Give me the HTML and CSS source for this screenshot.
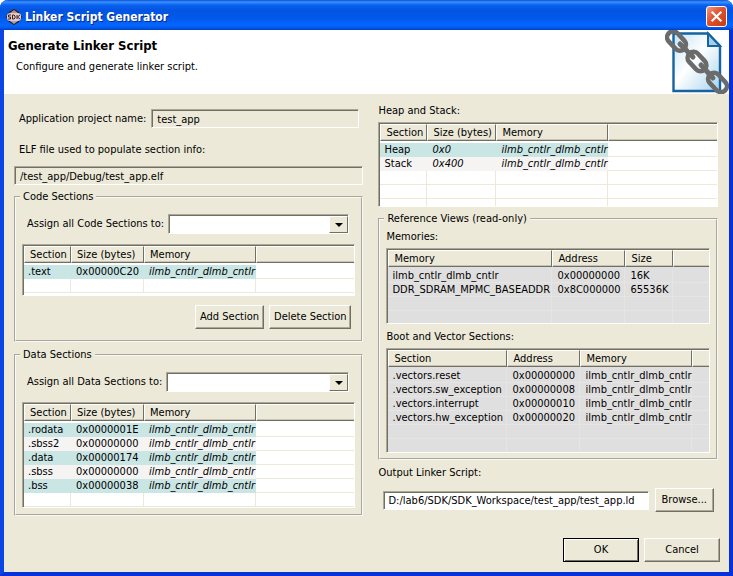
FILE: index.html
```html
<!DOCTYPE html>
<html lang="en">
<head>
    <meta charset="UTF-8">
    <meta name="viewport" content="width=device-width, initial-scale=1.0">
    <title>Linker Script Generator</title>
    <link rel="stylesheet" href="styles.css">
</head>
<body>
    <div class="window">
        <!-- Title bar -->
        <div class="titlebar">
            <svg class="app-icon" viewBox="0 0 16 16" aria-hidden="true">
                <path d="M8 0L13 3L16 8L13 13L8 16L3 13L0 8L3 3Z" fill="#2a1c22"/>
                <path d="M8 1L12 4H4Z" fill="#c98a7a"/>
                <path d="M4 12H12L8 15Z" fill="#a5a5b2"/>
                <rect x="1" y="4" width="14" height="8" rx="3" fill="#d9cfd0"/>
                <path d="M5 6H2.500V8H4.500V10H2M6.500 6V10H8L9 9V7L8 6ZM11 6V10M14 6L11.500 8L14 10" fill="none" stroke="#4a1c24"/>
            </svg>
            <span class="title">Linker Script Generator</span>
            <button type="button" class="close" aria-label="Close">
                <svg viewBox="0 0 21 21" aria-hidden="true">
                    <path d="M6 6L15 15M15 6L6 15" stroke="#fff" stroke-width="2.400" stroke-linecap="square"/>
                </svg>
            </button>
        </div>

        <!-- Banner -->
        <header class="banner">
            <div class="banner-text">
                <h1>Generate Linker Script</h1>
                <p>Configure and generate linker script.</p>
            </div>
            <svg class="banner-icon" viewBox="0 0 64 64" aria-hidden="true">
                <defs>
                    <linearGradient id="paper" x1="0" y1="0" x2="1" y2="1">
                        <stop offset="0" stop-color="#c4e4f6"/>
                        <stop offset="0.450" stop-color="#ffffff"/>
                        <stop offset="1" stop-color="#a5d3ee"/>
                    </linearGradient>
                </defs>
                <path d="M8.500 3.500H43L55 16V61H8.500Z" fill="url(#paper)" stroke="#16639f" stroke-width="2.400"/>
                <path d="M43 3.500V16H55Z" fill="#9fd0ef" stroke="#16639f" stroke-width="2"/>
                <g fill="none" stroke="#6b6b6b" stroke-width="4.600">
                    <rect x="-11" y="-6" width="22" height="12" rx="6" transform="translate(11.500 11) rotate(47)"/>
                    <rect x="-11" y="-6" width="22" height="12" rx="6" transform="translate(32 31.500) rotate(47)"/>
                    <rect x="-11" y="-6" width="22" height="12" rx="6" transform="translate(52.500 52.500) rotate(47)"/>
                    <path d="M15 14L28 27M36 35L48 48" stroke-width="5" stroke-linecap="round"/>
                </g>
            </svg>
        </header>

        <form class="content">
            <div class="columns">
                <!-- Left column -->
                <div class="column">
                    <div class="row project-row">
                        <label for="project">Application project name:</label>
                        <input type="text" id="project" class="field" value="test_app" readonly>
                    </div>
                    <label for="elf" class="elf-label">ELF file used to populate section info:</label>
                    <input type="text" id="elf" class="field" value="/test_app/Debug/test_app.elf" readonly>

                    <fieldset class="group code-group">
                        <legend>Code Sections</legend>
                        <div class="row assign-row">
                            <label for="code-target">Assign all Code Sections to:</label>
                            <div class="combo"><select id="code-target"><option></option></select></div>
                        </div>
                        <div class="list list-code">
                            <table>
                                <colgroup><col class="c-section"><col class="c-size"><col class="c-memory"><col></colgroup>
                                <thead><tr><th>Section</th><th>Size (bytes)</th><th>Memory</th><th></th></tr></thead>
                                <tbody>
                                    <tr class="odd"><td>.text</td><td>0x00000C20</td><td><i>ilmb_cntlr_dlmb_cntlr</i></td><td></td></tr>
                                    <tr><td></td><td></td><td></td><td></td></tr>
                                </tbody>
                            </table>
                        </div>
                        <div class="row section-buttons">
                            <button type="button" class="btn">Add Section</button>
                            <button type="button" class="btn">Delete Section</button>
                        </div>
                    </fieldset>

                    <fieldset class="group data-group">
                        <legend>Data Sections</legend>
                        <div class="row assign-row">
                            <label for="data-target">Assign all Data Sections to:</label>
                            <div class="combo"><select id="data-target"><option></option></select></div>
                        </div>
                        <div class="list list-data">
                            <table>
                                <colgroup><col class="c-section"><col class="c-size"><col class="c-memory"><col></colgroup>
                                <thead><tr><th>Section</th><th>Size (bytes)</th><th>Memory</th><th></th></tr></thead>
                                <tbody>
                                    <tr class="odd"><td>.rodata</td><td>0x0000001E</td><td><i>ilmb_cntlr_dlmb_cntlr</i></td><td></td></tr>
                                    <tr class="even"><td>.sbss2</td><td>0x00000000</td><td><i>ilmb_cntlr_dlmb_cntlr</i></td><td></td></tr>
                                    <tr class="odd"><td>.data</td><td>0x00000174</td><td><i>ilmb_cntlr_dlmb_cntlr</i></td><td></td></tr>
                                    <tr class="even"><td>.sbss</td><td>0x00000000</td><td><i>ilmb_cntlr_dlmb_cntlr</i></td><td></td></tr>
                                    <tr class="odd"><td>.bss</td><td>0x00000038</td><td><i>ilmb_cntlr_dlmb_cntlr</i></td><td></td></tr>
                                    <tr><td></td><td></td><td></td><td></td></tr>
                                </tbody>
                            </table>
                        </div>
                    </fieldset>
                </div>

                <!-- Right column -->
                <div class="column column-right">
                    <p class="caption">Heap and Stack:</p>
                    <div class="list list-heap">
                        <table>
                            <colgroup><col class="c-section"><col class="c-heap-size"><col class="c-memory"><col></colgroup>
                            <thead><tr><th>Section</th><th>Size (bytes)</th><th>Memory</th><th></th></tr></thead>
                            <tbody>
                                <tr class="odd"><td>Heap</td><td><i>0x0</i></td><td><i>ilmb_cntlr_dlmb_cntlr</i></td><td></td></tr>
                                <tr class="even"><td>Stack</td><td><i>0x400</i></td><td><i>ilmb_cntlr_dlmb_cntlr</i></td><td></td></tr>
                                <tr><td></td><td></td><td></td><td></td></tr>
                                <tr><td></td><td></td><td></td><td></td></tr>
                                <tr><td></td><td></td><td></td><td></td></tr>
                            </tbody>
                        </table>
                    </div>

                    <fieldset class="group views-group">
                        <legend>Reference Views (read-only)</legend>
                        <p class="caption">Memories:</p>
                        <div class="list list-memories readonly">
                            <table>
                                <colgroup><col class="c-name"><col class="c-size"><col class="c-small"><col></colgroup>
                                <thead><tr><th>Memory</th><th>Address</th><th>Size</th><th></th></tr></thead>
                                <tbody>
                                    <tr><td>ilmb_cntlr_dlmb_cntlr</td><td>0x00000000</td><td>16K</td><td></td></tr>
                                    <tr><td>DDR_SDRAM_MPMC_BASEADDR</td><td>0x8C000000</td><td>65536K</td><td></td></tr>
                                    <tr><td></td><td></td><td></td><td></td></tr>
                                    <tr><td></td><td></td><td></td><td></td></tr>
                                </tbody>
                            </table>
                        </div>
                        <p class="caption">Boot and Vector Sections:</p>
                        <div class="list list-boot readonly">
                            <table>
                                <colgroup><col class="c-vector"><col class="c-size"><col class="c-memory"><col></colgroup>
                                <thead><tr><th>Section</th><th>Address</th><th>Memory</th><th></th></tr></thead>
                                <tbody>
                                    <tr><td>.vectors.reset</td><td>0x00000000</td><td>ilmb_cntlr_dlmb_cntlr</td><td></td></tr>
                                    <tr><td>.vectors.sw_exception</td><td>0x00000008</td><td>ilmb_cntlr_dlmb_cntlr</td><td></td></tr>
                                    <tr><td>.vectors.interrupt</td><td>0x00000010</td><td>ilmb_cntlr_dlmb_cntlr</td><td></td></tr>
                                    <tr><td>.vectors.hw_exception</td><td>0x00000020</td><td>ilmb_cntlr_dlmb_cntlr</td><td></td></tr>
                                    <tr><td></td><td></td><td></td><td></td></tr>
                                    <tr><td></td><td></td><td></td><td></td></tr>
                                </tbody>
                            </table>
                        </div>
                    </fieldset>

                    <label for="output" class="output-label">Output Linker Script:</label>
                    <div class="row output-row">
                        <input type="text" id="output" class="field editable" value="D:/lab6/SDK/SDK_Workspace/test_app/test_app.ld">
                        <button type="button" class="btn">Browse...</button>
                    </div>
                </div>
            </div>

            <!-- Dialog buttons -->
            <div class="row dialog-buttons">
                <button type="submit" class="btn btn-default">OK</button>
                <button type="button" class="btn">Cancel</button>
            </div>
        </form>
    </div>
</body>
</html>
```
FILE: styles.css
```css
/* General Styles */
* {
    box-sizing: border-box;
}

body {
    margin: 0;
    background: #fff;
    font-family: Tahoma, "DejaVu Sans Condensed", "DejaVu Sans", sans-serif;
    font-size: 11px;
    line-height: 14px;
    color: #000;
}

input,
select,
button {
    font: inherit;
    color: inherit;
    border-radius: 0;
    margin: 0;
}

p,
h1 {
    margin: 0;
}

label,
legend,
.caption {
    white-space: nowrap;
}

/* Window frame */
.window {
    display: flex;
    flex-direction: column;
    min-height: 100vh;
    border: 4px solid #0831d9;
    border-top: 0;
    border-left-color: #0b45e4;
    border-radius: 8px 8px 0 0;
    background: #ece9d8;
}

.titlebar {
    display: flex;
    align-items: center;
    height: 30px;
    margin: 0 -4px;
    padding: 3px 6px 0;
    border-radius: 8px 8px 0 0;
    background: linear-gradient(#0a4fd6 0, #3a93ff 2px, #0a62f0 5px, #0355e0 10px, #0058ea 18px, #0466ff 25px, #0260f5 27px, #0040c8 30px);
}

.app-icon {
    width: 16px;
    height: 16px;
    margin-right: 3px;
}

.title {
    flex: 1;
    font-family: "Trebuchet MS", "DejaVu Sans Condensed", sans-serif;
    font-size: 12px;
    font-weight: bold;
    color: #fff;
    text-shadow: 1px 1px #0a2a8c;
}

.close {
    width: 21px;
    height: 21px;
    padding: 0;
    border: 1px solid #fff;
    border-radius: 3px;
    background: linear-gradient(135deg, #ee9a80, #e0502c 45%, #c93a14);
}

.close svg {
    display: block;
    width: 19px;
    height: 19px;
}

/* Banner */
.banner {
    display: flex;
    justify-content: space-between;
    height: 64px;
    padding-left: 4px;
    background: #fff;
}

.banner-text {
    padding-top: 8px;
}

.banner h1 {
    font-size: 13px;
    line-height: 16px;
}

.banner p {
    padding: 6px 8px;
}

.banner-icon {
    width: 64px;
    height: 64px;
}

/* Layout */
.content {
    flex: 1;
    padding: 10px 9px 10px 10px;
}

.columns {
    display: grid;
    grid-template-columns: 350fr 340fr;
    gap: 15px;
    padding-right: 2px;
}

.column {
    display: flex;
    flex-direction: column;
    min-width: 0;
}

.row {
    display: flex;
    align-items: center;
}

/* Sunken boxes */
.field,
.list,
.combo select {
    border: 1px solid;
    border-color: #aca899 #fff #fff #aca899;
    box-shadow: inset 1px 1px #716f64;
    outline: 0;
}

/* Fields */
.field {
    min-width: 0;
    height: 19px;
    padding: 1px 5px 0;
    background: #ece9d8;
}

.project-row {
    gap: 5px;
    margin-top: 5px;
    padding: 0 4px 0 5px;
}

.project-row .field {
    flex: 1;
}

.elf-label {
    margin: 15px 4px 9px 5px;
}

.field.editable {
    flex: 1;
    padding: 1px 4px 0;
    background: #fff;
}

/* Groups */
.group {
    min-width: 0;
    margin: 0;
    padding: 0 6px;
    border: 2px groove #fbfaf2;
}

.group legend {
    margin-left: -2px;
    padding: 0 3px;
}

.code-group {
    height: 152px;
    margin-top: 5px;
}

.data-group {
    height: 168px;
    margin-top: 6px;
}

.views-group {
    height: 248px;
    margin-top: 5px;
}

.views-group .caption {
    margin: 6px 0 4px;
}

.views-group legend + .caption {
    margin-top: 4px;
}

.assign-row {
    gap: 4px;
    margin: 10px 6px 10px 5px;
}

/* Drop-downs */
.combo {
    position: relative;
    flex: 1;
    display: flex;
}

.combo select {
    flex: 1;
    height: 20px;
    padding: 0 20px 0 4px;
    background: #fff;
    appearance: none;
}

.combo::before {
    content: "";
    position: absolute;
    top: 2px;
    right: 1px;
    bottom: 1px;
    width: 17px;
    border: 1px solid;
    border-color: #fff #716f64 #716f64 #fff;
    background: #ece9d8;
    pointer-events: none;
}

.combo::after {
    content: "";
    position: absolute;
    top: 9px;
    right: 6px;
    border: 4px solid transparent;
    border-top-color: #000;
    border-bottom: 0;
    pointer-events: none;
}

/* Lists */
.list {
    overflow: hidden;
    padding: 1px 0 0 1px;
    background: #fff;
}

.list table {
    width: 100%;
    table-layout: fixed;
    border-collapse: separate;
    border-spacing: 0;
}

.list th {
    height: 17px;
    padding: 1px 0 0 5px;
    border: 1px solid;
    border-color: #fff #716f64 #716f64 #fff;
    background: #ece9d8;
    box-shadow: inset 0 -1px #c9c5b4;
    font-weight: normal;
    text-align: left;
    line-height: 14px;
    white-space: nowrap;
}

.list th:last-child {
    border-right: 0;
}

/* Small gap between the header and the first row */
.list tbody::before {
    content: "";
    display: table-row;
    height: 2px;
}

.list td {
    height: 14px;
    padding: 0 0 0 5px;
    border-right: 1px solid #ece9d8;
    border-bottom: 1px solid #ece9d8;
    line-height: 13px;
    white-space: nowrap;
}

.list td:first-child {
    padding-left: 4px;
}

.list td:last-child {
    border-right: 0;
}

.list .odd td:not(:last-child) {
    border-color: #c9e5e4;
    background: #c9e5e4;
}

.list .even td:not(:last-child) {
    border-color: #f5f4f3;
    background: #f5f4f3;
}

.list.readonly {
    background: #e0dfdf;
}

.list.readonly td {
    border-color: #e6e5e3;
}

.list-code {
    height: 52px;
}

.list-data {
    height: 106px;
}

.list-heap {
    height: 85px;
}

.list-memories {
    height: 76px;
}

.list-boot {
    height: 105px;
}

.c-section {
    width: 47px;
}

.c-size {
    width: 73px;
}

.c-heap-size {
    width: 69px;
}

.c-memory {
    width: 112px;
}

.c-small {
    width: 48px;
}

.c-name {
    width: 164px;
}

.c-vector {
    width: 119px;
}

/* Buttons */
.btn {
    height: 24px;
    padding: 0 4px;
    border: 1px solid;
    border-color: #fff #716f64 #716f64 #fff;
    background: #ece9d8;
    box-shadow: inset -1px -1px #aca899;
    white-space: nowrap;
}

.section-buttons {
    justify-content: flex-end;
    gap: 5px;
    margin: 9px 4px 0;
}

/* Right column */
.column-right > .caption {
    margin-bottom: 4px;
}

.output-label {
    margin: 6px 0 8px;
}

.output-row {
    gap: 6px;
    padding: 0 4px 0 5px;
}

.output-row .btn {
    padding: 0 6px;
}

.dialog-buttons {
    justify-content: flex-end;
    gap: 5px;
    margin-top: 22px;
}

.dialog-buttons .btn {
    width: 76px;
}

.dialog-buttons .btn-default {
    border-color: #000;
    box-shadow: inset 1px 1px #fff, inset -1px -1px #716f64;
}
```
